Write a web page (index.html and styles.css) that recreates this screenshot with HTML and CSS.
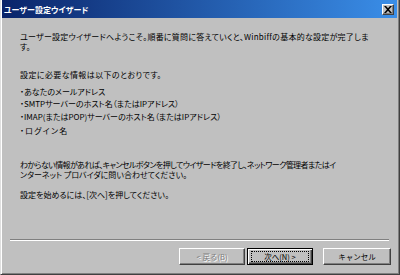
FILE: index.html
```html
<!DOCTYPE html>
<html lang="ja">
<head>
  <meta charset="UTF-8">
  <title>ユーザー設定ウイザード</title>
  <link rel="stylesheet" href="styles.css">
</head>
<body>

  <div class="window">
    <div class="titlebar">
      <span class="title">ユーザー設定ウイザード</span>
      <span class="close">
        <svg width="8" height="7" viewBox="0 0 8 7">
          <path d="M0 0h2l2 2.3L6 0h2L5 3.5 8 7H6L4 4.7 2 7H0l3-3.5z" fill="#000"/>
        </svg>
      </span>
    </div>

    <div class="body">
      <div class="content">
        <p class="intro"><span class="wide">ユーザー設定ウイザードへようこそ。順番に質問に答えていくと、Winbiffの基本的な設定が完了しま</span><br>す。</p>

        <p class="lead">設定に必要な情報は以下のとおりです。</p>
        <ul class="items">
          <li>・あなたのメールアドレス</li>
          <li class="smtp">・SMTPサーバーのホスト名（またはIPアドレス）</li>
          <li>・IMAP(またはPOP)サーバーのホスト名（またはIPアドレス）</li>
          <li class="last">・ログイン名</li>
        </ul>

        <p class="note"><span class="tight">わからない情報があれば、キャンセルボタンを押してウイザードを終了し、ネットワーク管理者またはイ</span><br>ンターネット プロバイダに問い合わせてください。</p>

        <p class="start">設定を始めるには、[次へ]を押してください。</p>
      </div>

      <div class="separator"></div>

      <div class="buttons">
        <button class="btn" disabled>&lt; 戻る(B)</button>
        <button class="btn default"><span class="focus">次へ(N) &gt;</span></button>
        <button class="btn cancel">キャンセル</button>
      </div>
    </div>
  </div>

</body>
</html>
```

FILE: styles.css
```css
body {
  margin: 0;
  font-family: "Noto Sans CJK JP", "Noto Sans", sans-serif;
  font-feature-settings: "palt";
  background-color: #c0c0c0;
}
.window {
  width: 400px;
  height: 275px;
  box-sizing: border-box;
  border-left: 1px solid #dfdfdf;
  border-right: 1px solid #404040;
  border-bottom: 1px solid #404040;
  box-shadow: inset 1px 0 0 #ffffff, inset -1px -1px 0 #808080;
  background-color: #c0c0c0;
  display: flex;
  flex-direction: column;
}
.titlebar {
  height: 18px;
  margin: 0 2px 0 1px;
  background: linear-gradient(to right, #0a246a, #3a8ee8);
  display: flex;
  align-items: center;
  justify-content: space-between;
  padding: 0 3px 0 2px;
}
.title {
  color: #ffffff;
  font-size: 8px;
  font-weight: bold;
}
.close {
  width: 12px;
  height: 11px;
  box-sizing: border-box;
  background-color: #c0c0c0;
  border: 1px solid;
  border-color: #ffffff #404040 #404040 #ffffff;
  box-shadow: inset -1px -1px 0 #808080;
  display: flex;
  align-items: center;
  justify-content: center;
}
.body {
  flex: 1;
  display: flex;
  flex-direction: column;
}
.content {
  flex: 1;
  padding: 14px 0 0 19px;
  font-size: 8px;
  line-height: 9.5px;
  color: #000000;
  white-space: nowrap;
}
p {
  margin: 0;
}
.intro {
  margin-bottom: 19px;
}
.wide {
  letter-spacing: 0.25px;
}
.lead {
  margin-bottom: 7px;
  letter-spacing: 0.4px;
}
.items {
  list-style: none;
  margin: 0;
  padding: 0;
}
.items li {
  margin-bottom: 3px;
}
.items li.last {
  margin-top: 5px;
  margin-bottom: 24.5px;
  letter-spacing: 1.2px;
}
.note {
  margin-bottom: 11px;
}
.tight {
  letter-spacing: -0.6px;
}
.separator {
  margin: 0 10px 0 9px;
  border-top: 1px solid #808080;
  border-bottom: 1px solid #ffffff;
}
.buttons {
  display: flex;
  justify-content: flex-end;
  gap: 2px;
  padding: 7px 8px 9px 0;
}
.btn {
  width: 66px;
  height: 17px;
  padding: 0;
  font-family: inherit;
  font-size: 7.5px;
  color: #000000;
  background-color: #c0c0c0;
  border: 1px solid;
  border-color: #ffffff #404040 #404040 #ffffff;
  box-shadow: inset -1px -1px 0 #808080;
}
.btn:disabled {
  color: #808080;
  text-shadow: 1px 1px 0 #ffffff;
}
.btn.default {
  border: 1px solid #000000;
  box-shadow: inset 1px 1px 0 #ffffff, inset -1px -1px 0 #404040, inset -2px -2px 0 #808080;
}
.focus {
  display: block;
  margin: 0 3px;
  border: 1px dotted #000000;
  line-height: 9px;
}
.btn.cancel {
  width: 68px;
  margin-left: 8px;
}
```
